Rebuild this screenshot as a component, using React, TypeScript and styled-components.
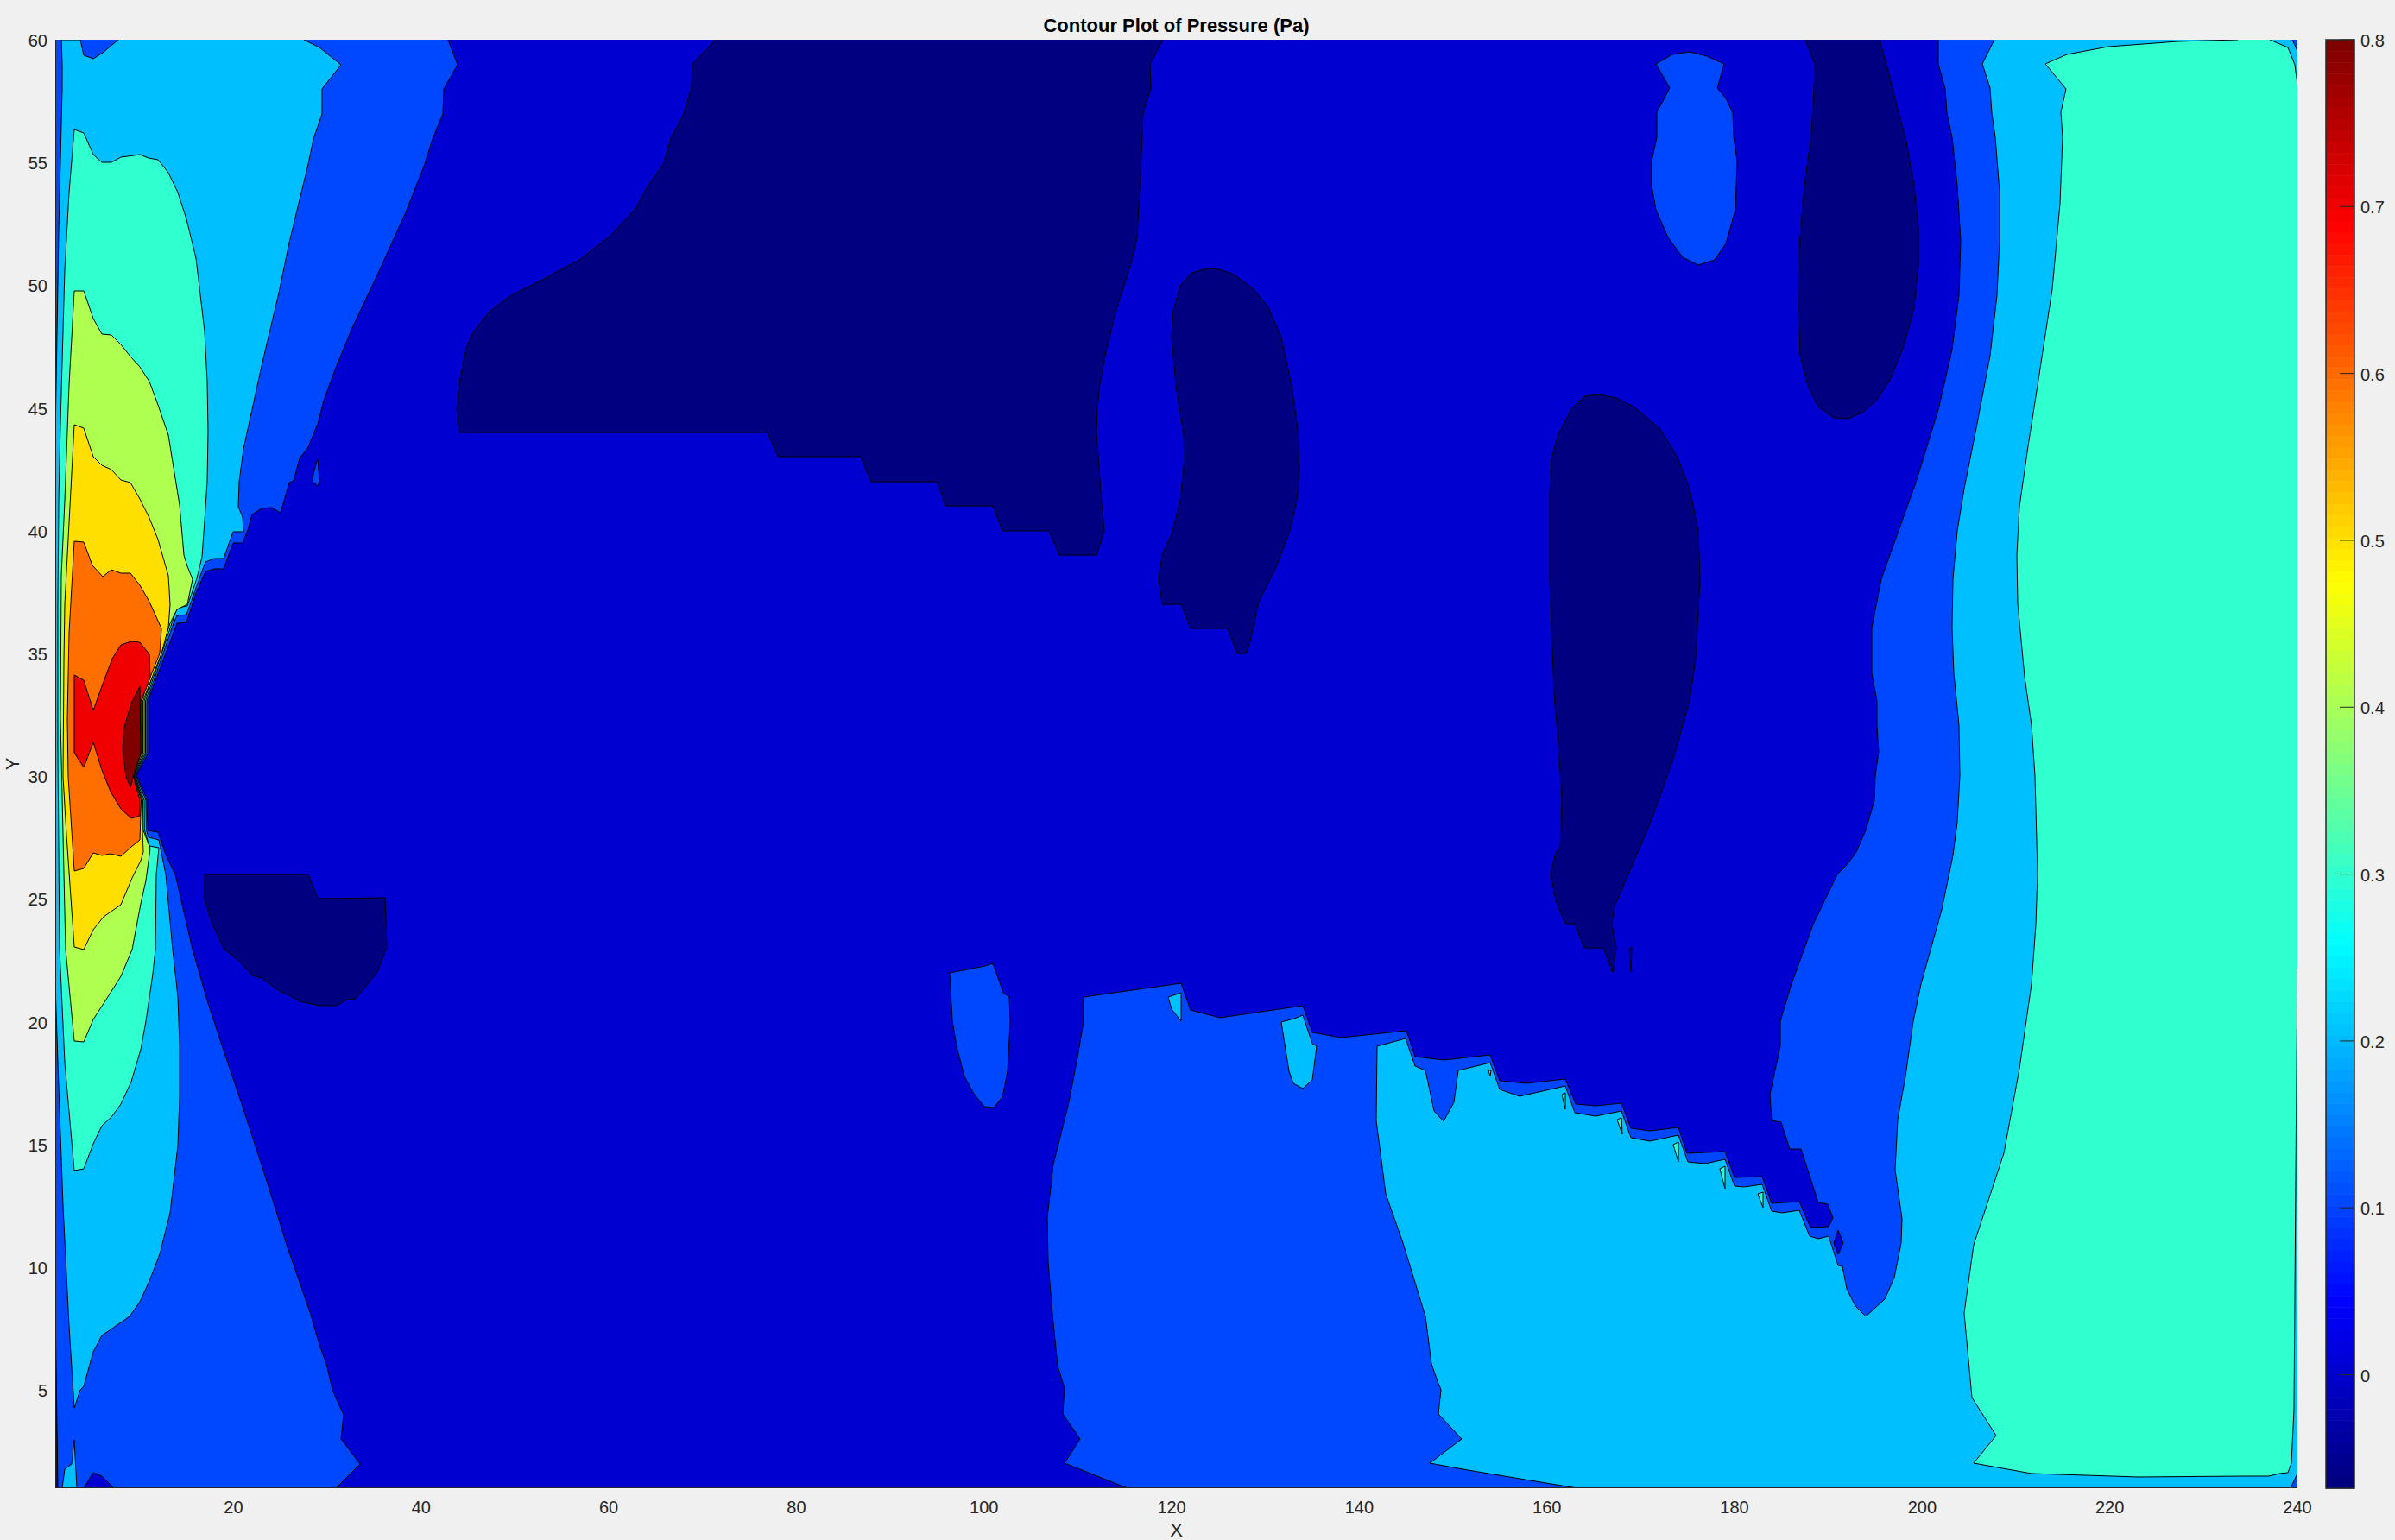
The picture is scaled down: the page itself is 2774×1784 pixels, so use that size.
import React from "react";
import styled, { createGlobalStyle } from "styled-components";

const GlobalStyle = createGlobalStyle`
    html, body {
        margin: 0;
        padding: 0;
        background: #f0f0f0;
    }
`;

const Figure = styled.div`
    display: grid;
    grid-template-columns: 64px 2597px 33px 33px 47px;
    grid-template-rows: 46px 1678px 60px;
    width: 2774px;
    height: 1784px;
    overflow: hidden;
    background: #f0f0f0;
    font-family: "Liberation Sans", Arial, sans-serif;
`;

const Title = styled.h1`
    grid-column: 2;
    grid-row: 1;
    margin: 0;
    padding-top: 17px;
    text-align: center;
    font-size: 22px;
    line-height: 26px;
    font-weight: 700;
    color: #000;
`;

const YAxis = styled.svg`
    grid-column: 1;
    grid-row: 2;
    overflow: visible;
`;

const XAxis = styled.svg`
    grid-column: 2;
    grid-row: 3;
    overflow: visible;
`;

const Plot = styled.svg`
    grid-column: 2;
    grid-row: 2;
    display: block;
`;

const ColorBar = styled.svg`
    grid-column: 4 / 6;
    grid-row: 2;
    overflow: visible;
`;

const TickLabel = styled.text`
    font-size: 20px;
    fill: #262626;
`;

const AxisLabel = styled.text`
    font-size: 22px;
    fill: #262626;
`;

const Region = styled.polygon`
    stroke: #000;
    stroke-width: 1;
    stroke-linejoin: round;
`;

const AxisLine = styled.line`
    stroke: #262626;
    stroke-width: 2;
`;

const BarFrame = styled.rect`
    fill: none;
    stroke: #262626;
    stroke-width: 1.5;
`;

const BarTick = styled.line`
    stroke: #262626;
    stroke-width: 1;
`;

const DEEP = "#000080";
const L0 = "#0000d0";
const L1 = "#0048ff";
const L2 = "#00bfff";
const L3 = "#30ffcf";
const L4 = "#afff50";
const L5 = "#ffdf00";
const L6 = "#ff6f00";
const L7 = "#f00000";
const L8 = "#800000";

// all points are in screenshot pixels, the plot's viewBox starts at 64,46.
// edge points sit outside the viewBox so the clip hides their stroke
const REGIONS: { fill: string; points: string }[] = [
    // pressure band along the inlet side
    {
        fill: L1,
        points:
            "58,40 519,40 519,46 530,75 514,103 513,132 501,161 492,190 470,246 440,312 407,382 387,431 375,464 368,491 357,518 347,531 340,557 335,559 325,594 314,588 303,589 292,596 287,614 281,629 270,629 259,659 248,659 238,662 227,687 216,721 205,722 172,810 172,872 158,898 170,925 171,962 183,964 192,990 203,1013 223,1100 240,1159 257,1211 280,1279 307,1362 333,1445 360,1523 370,1558 378,1580 385,1610 398,1639 395,1667 417,1696 389,1724 389,1730 58,1730",
    },
    // everything right of the wake
    {
        fill: L1,
        points:
            "2245,40 2245,74 2253,103 2255,131 2261,159 2267,215 2271,279 2269,342 2261,405 2245,475 2219,559 2189,643 2179,671 2168,727 2168,780 2174,812 2174,840 2176,871 2172,899 2171,927 2161,962 2150,987 2139,1002 2128,1013 2100,1071 2075,1140 2062,1183 2062,1212 2050,1268 2052,1298 2063,1300 2073,1331 2086,1331 2106,1393 2117,1395 2123,1411 2118,1421 2097,1422 2084,1392 2052,1394 2041,1363 2009,1364 1998,1334 1954,1336 1944,1306 1911,1310 1889,1307 1878,1278 1848,1281 1825,1279 1813,1250 1768,1255 1737,1252 1726,1222 1672,1228 1639,1224 1629,1194 1553,1202 1520,1196 1509,1165 1413,1179 1379,1170 1368,1139 1255,1155 1255,1184 1248,1225 1238,1277 1220,1349 1213,1411 1214,1462 1219,1522 1225,1582 1233,1608 1231,1638 1251,1667 1233,1695 1306,1724 1306,1730 2670,1730 2670,40",
    },
    { fill: L0, points: "58,1442 63,1442 67,1724 67,1730 58,1730" },
    { fill: L0, points: "97,1730 97,1724 108,1706 118,1710 132,1724 132,1730" },
    { fill: L0, points: "2129,1425 2135,1440 2129,1453 2124,1440" },
    { fill: L0, points: "2083,1408 2085,1408 2085,1414 2083,1414" },

    // deep low pressure blobs
    {
        fill: DEEP,
        points:
            "829,40 829,46 802,74 801,101 792,132 777,160 769,189 750,216 736,242 707,273 671,301 628,324 589,344 566,362 548,385 540,403 532,444 529,473 532,501 889,501 901,529 997,529 1009,558 1086,558 1095,586 1150,586 1161,615 1215,615 1227,643 1270,643 1279,615 1276,583 1270,501 1271,473 1274,444 1281,407 1292,362 1311,302 1317,275 1321,201 1324,131 1333,102 1332,74 1347,46 1347,40",
    },
    {
        fill: DEEP,
        points:
            "1398,311 1380,316 1367,331 1359,359 1357,391 1362,447 1371,503 1372,531 1367,580 1357,619 1346,643 1342,671 1346,700 1368,700 1379,728 1422,728 1433,757 1444,757 1452,727 1457,699 1478,657 1494,615 1502,580 1505,545 1503,496 1496,447 1484,391 1469,356 1452,335 1429,318 1412,312",
    },
    {
        fill: DEEP,
        points:
            "1852,457 1835,459 1820,474 1805,503 1797,531 1795,573 1795,671 1800,805 1805,861 1809,927 1807,983 1802,987 1796,1013 1802,1043 1813,1070 1824,1070 1835,1098 1857,1098 1868,1127 1872,1098 1867,1070 1870,1050 1879,1029 1912,952 1937,882 1957,812 1964,763 1969,671 1967,615 1957,566 1942,528 1922,496 1892,471 1872,461",
    },
    { fill: DEEP, points: "1887,1099 1890,1097 1889,1126" },
    {
        fill: DEEP,
        points:
            "2091,40 2091,46 2102,74 2101,103 2098,156 2090,215 2084,286 2083,356 2085,412 2094,447 2106,471 2124,484 2140,485 2157,478 2173,464 2189,440 2205,401 2217,356 2222,307 2222,264 2217,215 2207,159 2199,131 2187,82 2177,46 2177,40",
    },
    {
        fill: DEEP,
        points:
            "237,1013 357,1013 368,1041 446,1040 448,1097 437,1126 412,1157 402,1158 390,1165 370,1165 347,1160 335,1153 325,1149 303,1133 292,1130 277,1113 260,1100 247,1073 237,1043",
    },

    // small islands of the 0.1 band
    {
        fill: L1,
        points:
            "1918,74 1937,63 1957,60 1977,65 1997,74 1989,102 1999,114 2007,131 2008,159 2012,187 2010,243 1999,282 1986,301 1967,307 1949,298 1932,275 1918,243 1913,215 1913,187 1919,159 1919,130 1934,102",
    },
    {
        fill: L1,
        points:
            "1100,1127 1141,1119 1150,1116 1162,1150 1169,1155 1170,1184 1167,1241 1161,1271 1151,1283 1140,1282 1128,1267 1117,1247 1108,1212 1103,1182",
    },
    { fill: L1, points: "368,531 361,557 368,563 370,558" },

    // 0.2 band
    {
        fill: L2,
        points:
            "71,40 71,46 93,46 97,64 108,68 119,61 137,46 137,40 352,40 352,46 370,55 395,75 373,103 373,132 363,161 357,190 335,281 323,339 303,424 282,520 277,558 276,587 281,599 282,616 270,616 259,647 248,647 238,651 232,667 216,712 205,713 201,722 170,812 170,872 157,898 169,927 169.5,962 172,970 184,973 188,993 192,1013 200,1100 206,1155 208,1211 208,1270 206,1327 197,1405 185,1453 173,1484 162,1508 150,1525 137,1534 118,1547 108,1566 97,1606 93,1610 86,1631 80,1536 73,1397 67,1231 64,1140 58,1140 58,513 64,513 65,446 68,268 72,103 72,75",
    },
    { fill: L2, points: "72,1730 72,1724 75,1702 83,1696 86,1668 89,1724 89,1730" },
    {
        fill: L2,
        points:
            "2310,40 2310,46 2296,74 2305,102 2307,131 2311,159 2316,222 2316,279 2313,342 2305,412 2289,496 2275,566 2267,615 2262,671 2261,727 2263,780 2269,840 2270,899 2267,952 2262,991 2249,1054 2225,1140 2216,1183 2207,1247 2198,1297 2195,1355 2203,1412 2202,1440 2194,1480 2183,1505 2161,1525 2149,1513 2139,1493 2134,1467 2129,1466 2118,1432 2106,1435 2096,1432 2084,1402 2064,1405 2052,1403 2041,1372 2020,1375 2009,1374 1998,1343 1975,1348 1955,1346 1944,1315 1911,1322 1889,1318 1878,1287 1848,1293 1824,1289 1813,1258 1760,1270 1737,1262 1726,1231 1689,1240 1684,1277 1672,1299 1661,1287 1651,1240 1639,1235 1628,1203 1595,1212 1594,1298 1605,1383 1625,1440 1651,1525 1658,1580 1665,1600 1669,1610 1666,1638 1693,1667 1656,1695 1700,1703 1827,1724 1827,1730 2653,1730 2653,1724 2661,1707 2670,1707 2670,59 2661,59 2655,46 2655,40",
    },
    { fill: L2, points: "1353,1155 1368,1150 1368,1183 1357,1169" },
    {
        fill: L2,
        points:
            "1484,1184 1499,1180 1509,1176 1520,1209 1525,1212 1520,1251 1509,1261 1498,1255 1493,1241",
    },

    // 0.3 band
    {
        fill: L3,
        points:
            "86,150 97,154 108,179 118,188 129,188 140,182 162,179 172,183 183,185 195,200 206,223 216,254 227,299 237,384 240,442 241,500 240,558 237,603 234,645 228,670 217,702 205,704 199,722 168.5,812 168.5,872 156,898 167,927 167.5,962 173,980 184,982 181,1013 180,1100 177,1128 169,1183 163,1216 152,1253 140,1279 129,1294 118,1304 108,1325 97,1354 86,1356 75,1231 69,1100 67,867 67,700 68,580 70,491 75,312 80,223",
    },
    {
        fill: L3,
        points:
            "2369,74 2394,63 2442,54 2522,48 2592,46 2592,40 2629,40 2629,46 2650,55 2658,75 2661,98 2670,98 2670,1121 2661,1121 2659.5,1300 2658,1500 2657,1633 2654,1695 2650,1706 2640,1707 2628,1710 2600,1710 2477,1711 2353,1707 2286,1695 2312,1663 2284,1619 2275,1521 2286,1442 2321,1336 2339,1238 2353,1140 2358,1071 2360,1012 2357,899 2353,840 2345,784 2337,699 2336,643 2339,587 2349,517 2361,440 2377,335 2386,236 2389,159 2387,130 2393,103",
    },
    { fill: L3, points: "1724,1240 1727,1240 1726,1247" },
    { fill: L3, points: "1809,1268 1813,1266 1813,1285" },
    { fill: L3, points: "1873,1297 1878,1295 1879,1314" },
    { fill: L3, points: "1938,1326 1944,1323 1944,1346" },
    { fill: L3, points: "1992,1354 1998,1351 1998,1377" },
    { fill: L3, points: "2036,1383 2042,1381 2042,1399" },

    // hot core at the inlet
    {
        fill: L4,
        points:
            "86,337 97,337 108,369 118,387 129,388 140,399 151,413 162,425 173,442 183,469 195,504 203,554 208,585 213,643 217,656 223,671 217,700 205,706 197,722 167,812 167,872 155.5,898 165.5,927 166,962 174,983 169,1020 163,1047 153,1100 140,1131 128,1150 108,1181 97,1207 86,1206 76,1100 70,833 71,667 75,580 80,446",
    },
    {
        fill: L5,
        points:
            "86,492 97,496 108,529 118,539 129,544 140,556 151,559 162,578 173,600 183,625 195,667 197,700 195,727 187,757 165.5,812 165.5,872 155,898 164.5,927 165,963 166,987 163,997 153,1017 140,1048 120,1062 108,1077 97,1100 86,1097 77,967 73,900 74,767 75,700",
    },
    {
        fill: L6,
        points:
            "86,627 97,628 107,655 119,668 129,660 140,664 151,664 162,678 173,697 187,728 185,757 173,787 164,812 164,872 154.5,898 163.5,927 162,973 152,981 140,992 128,989 118,991 108,988 97,1006 86,1009 79,900 78,833 80,733",
    },
    {
        fill: L7,
        points:
            "86,782 97,788 108,823 118,795 130,763 140,747 152,743 162,744 173,758 174,785 163,813 163,872 154,898 162,927 162,945 152,948 140,937 128,917 118,892 108,860 97,889 86,872",
    },
    {
        fill: L8,
        points: "162,795 152,815 144,842 142,868 146,900 151,912 155,898 163,872",
    },
];

const PLOT_W = 2597;
const PLOT_H = 1678;
const BAND_COUNT = 128;

const Y_TICKS = [60, 55, 50, 45, 40, 35, 30, 25, 20, 15, 10, 5];
const X_TICKS = [20, 40, 60, 80, 100, 120, 140, 160, 180, 200, 220, 240];
const BAR_TICKS = [0.8, 0.7, 0.6, 0.5, 0.4, 0.3, 0.2, 0.1, 0];

const clamp = (v: number) => Math.max(0, Math.min(1, v));

const jet = (t: number) => {
    const r = clamp(1.5 - Math.abs(4 * t - 3));
    const g = clamp(1.5 - Math.abs(4 * t - 2));
    const b = clamp(1.5 - Math.abs(4 * t - 1));
    return `rgb(${Math.round(r * 255)},${Math.round(g * 255)},${Math.round(b * 255)})`;
};

const BANDS = Array.from({ length: BAND_COUNT }, (_, i) =>
    jet((BAND_COUNT - 1 - i) / (BAND_COUNT - 1))
);

const barY = (v: number) => ((0.8 - v) / 0.868) * PLOT_H;

const App: React.FC = () => {
    return (
        <Figure>
            <GlobalStyle />
            <Title>Contour Plot of Pressure (Pa)</Title>

            <YAxis width={64} height={PLOT_H}>
                {Y_TICKS.map((v) => (
                    <TickLabel
                        key={v}
                        x={55}
                        y={((60 - v) / 59) * PLOT_H + 1}
                        textAnchor="end"
                        dominantBaseline="central"
                    >
                        {v}
                    </TickLabel>
                ))}
                <AxisLabel
                    textAnchor="middle"
                    dominantBaseline="central"
                    transform={`translate(14 ${PLOT_H / 2}) rotate(-90)`}
                >
                    Y
                </AxisLabel>
            </YAxis>

            <Plot width={PLOT_W} height={PLOT_H} viewBox={`64 46 ${PLOT_W} ${PLOT_H}`}>
                <rect x={64} y={46} width={PLOT_W} height={PLOT_H} fill={L0} />
                {REGIONS.map((r, i) => (
                    <Region key={i} fill={r.fill} points={r.points} />
                ))}
                <AxisLine x1={64} y1={46} x2={64} y2={1724} />
                <AxisLine x1={64} y1={1724} x2={2661} y2={1724} />
            </Plot>

            <ColorBar width={80} height={PLOT_H}>
                {BANDS.map((c, i) => (
                    <rect
                        key={i}
                        x={0}
                        y={(i * PLOT_H) / BAND_COUNT}
                        width={33}
                        height={PLOT_H / BAND_COUNT + 0.5}
                        fill={c}
                    />
                ))}
                <BarFrame x={0} y={0} width={33} height={PLOT_H} />
                {BAR_TICKS.map((v) => (
                    <React.Fragment key={v}>
                        <BarTick x1={16} y1={barY(v)} x2={33} y2={barY(v)} />
                        <TickLabel x={40} y={barY(v) + 1} dominantBaseline="central">
                            {v}
                        </TickLabel>
                    </React.Fragment>
                ))}
            </ColorBar>

            <XAxis width={PLOT_W} height={60}>
                {X_TICKS.map((v) => (
                    <TickLabel
                        key={v}
                        x={((v - 1) / 239) * PLOT_W}
                        y={22}
                        textAnchor="middle"
                        dominantBaseline="central"
                    >
                        {v}
                    </TickLabel>
                ))}
                <AxisLabel
                    x={PLOT_W / 2}
                    y={48}
                    textAnchor="middle"
                    dominantBaseline="central"
                >
                    X
                </AxisLabel>
            </XAxis>
        </Figure>
    );
};

export default App;
